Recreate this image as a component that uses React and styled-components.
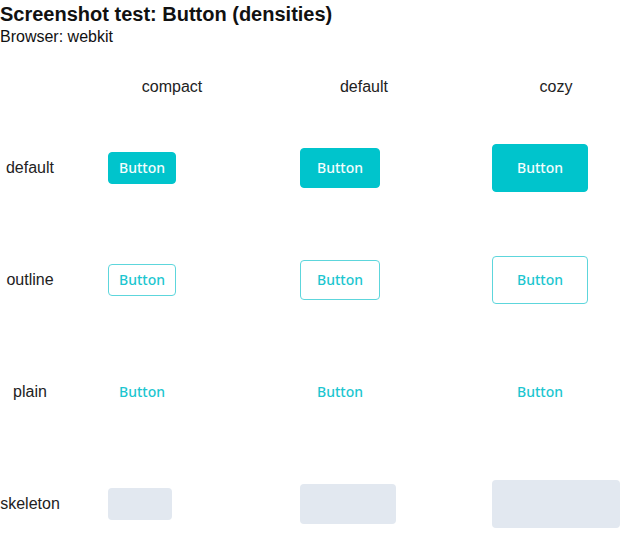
import React from 'react';
import styled, {createGlobalStyle} from 'styled-components';

const densities = ['compact', 'default', 'cozy'];
const variants = ['default', 'outline', 'plain', 'skeleton'];

const sizes = {
  compact: {height: 32, padX: 10, skeleton: 64},
  default: {height: 40, padX: 16, skeleton: 96},
  cozy: {height: 48, padX: 24, skeleton: 128},
};

function App() {
  return (
    <>
      <GlobalStyle />
      <Title>Screenshot test: Button (densities)</Title>
      <Subtitle>Browser: webkit</Subtitle>

      <Table>
        <Corner />
        {densities.map((d) => (
          <HeadCell key={d}>{d}</HeadCell>
        ))}

        {variants.map((v) => (
          <React.Fragment key={v}>
            <RowLabel>{v}</RowLabel>
            {densities.map((d) => (
              <Cell key={d}>
                {v === 'skeleton' ? (
                  <Skeleton $density={d} />
                ) : (
                  <Button $variant={v} $density={d}>
                    Button
                  </Button>
                )}
              </Cell>
            ))}
          </React.Fragment>
        ))}
      </Table>
    </>
  );
}

export default App;

const GlobalStyle = createGlobalStyle`
  html, body {
    margin: 0;
    overflow: hidden;
    background: #fff;
    color: #111;
    font-family: "Liberation Sans", Arial, sans-serif;
  }
`;

const Title = styled.div`
  font-size: 20px;
  font-weight: bold;
  line-height: 28px;
`;

const Subtitle = styled.div`
  font-size: 16px;
  line-height: 18px;
`;

const Table = styled.div`
  display: grid;
  grid-template-columns: 44px repeat(3, 128px);
  grid-auto-rows: 112px;
  grid-template-rows: 50px;
  column-gap: 64px;
  margin-top: 16px;
  font-size: 16px;
`;

const Corner = styled.div``;

const HeadCell = styled.div`
  display: flex;
  align-items: center;
  justify-content: center;
  color: #222;
`;

const RowLabel = styled.div`
  width: 60px;
  display: flex;
  align-items: center;
  justify-content: center;
  color: #222;
`;

const Cell = styled.div`
  display: flex;
  align-items: center;
`;

const Button = styled.button`
  box-sizing: border-box;
  display: inline-flex;
  align-items: center;
  justify-content: center;
  height: ${(p) => sizes[p.$density].height}px;
  padding: 0 ${(p) => sizes[p.$density].padX}px 1px;
  border-radius: 4px;
  font-family: "Noto Sans", "Open Sans", sans-serif;
  font-size: 14px;
  font-weight: 500;
  line-height: 1;
  cursor: pointer;
  border: 1px solid
    ${(p) =>
      p.$variant === 'default'
        ? '#00c4cc'
        : p.$variant === 'outline'
          ? '#5dd6dc'
          : 'transparent'};
  background: ${(p) => (p.$variant === 'default' ? '#00c4cc' : 'transparent')};
  color: ${(p) => (p.$variant === 'default' ? '#f4fdfd' : '#1cc6d0')};
`;

const Skeleton = styled.div`
  width: ${(p) => sizes[p.$density].skeleton}px;
  height: ${(p) => sizes[p.$density].height}px;
  border-radius: 4px;
  background: #e2e8f0;
`;
